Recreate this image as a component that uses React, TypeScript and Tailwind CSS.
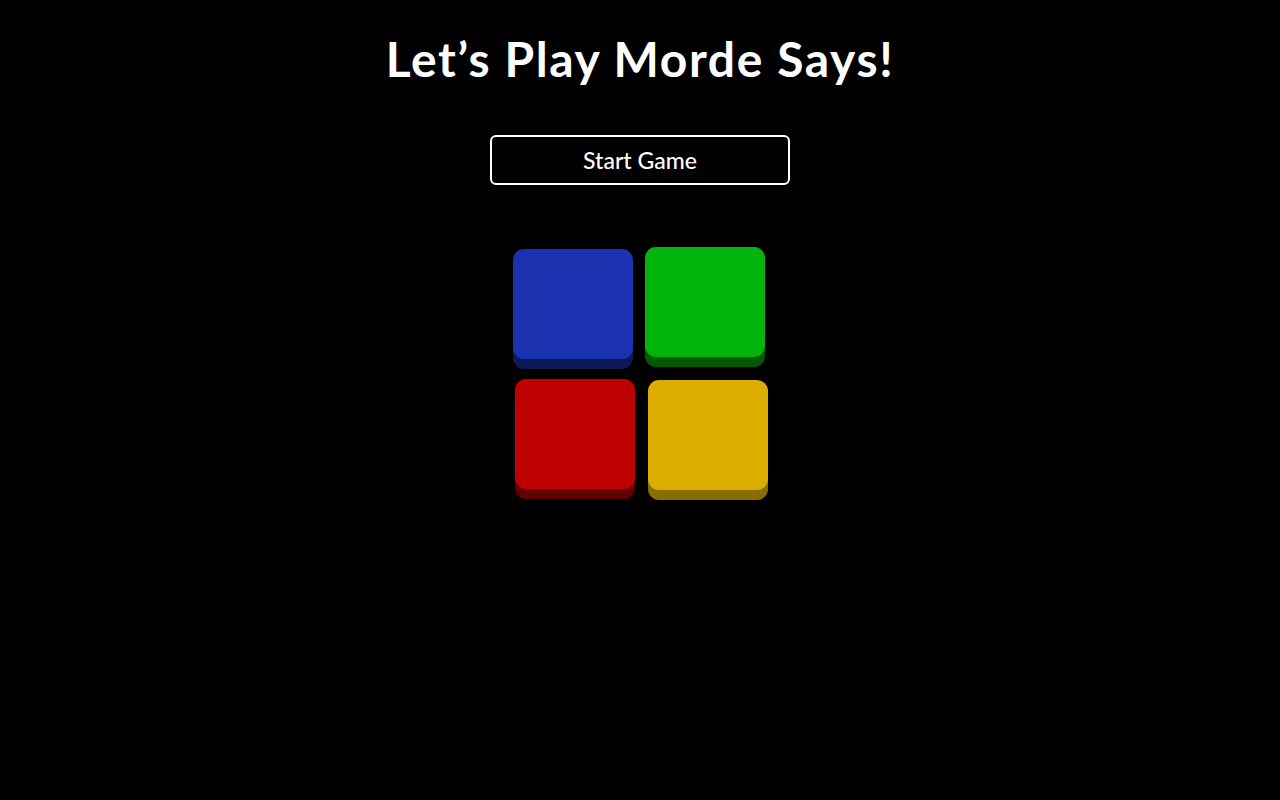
export default function App() {
  return (
    <main className="min-h-screen bg-black text-white flex flex-col items-center font-['Lato','Liberation_Sans',sans-serif]">
      <h1 className="mt-[29px] text-[48px] leading-[60px] font-bold tracking-[1.6px]">Let’s Play Morde Says!</h1>
      <button className="mt-[46px] w-[300px] h-[50px] rounded-[6px] border-2 border-white text-[23px] font-medium leading-none">
        Start Game
      </button>
      <div className="mt-[62px] ml-[-2px] grid grid-cols-[120px_120px] gap-x-[12px] gap-y-[20px]">
        <div className="w-[120px] h-[110px] rounded-[11px] bg-[#1a31b0] shadow-[0_10px_0_#0c1958] translate-y-[2px]" />
        <div className="w-[120px] h-[110px] rounded-[11px] bg-[#02b40b] shadow-[0_10px_0_#005a05]" />
        <div className="w-[120px] h-[110px] rounded-[11px] bg-[#bf0000] shadow-[0_10px_0_#600000] translate-x-[2px] translate-y-[2px]" />
        <div className="w-[120px] h-[110px] rounded-[11px] bg-[#dbae00] shadow-[0_10px_0_#8a6d00] translate-x-[3px] translate-y-[3px]" />
      </div>
    </main>
  );
}
